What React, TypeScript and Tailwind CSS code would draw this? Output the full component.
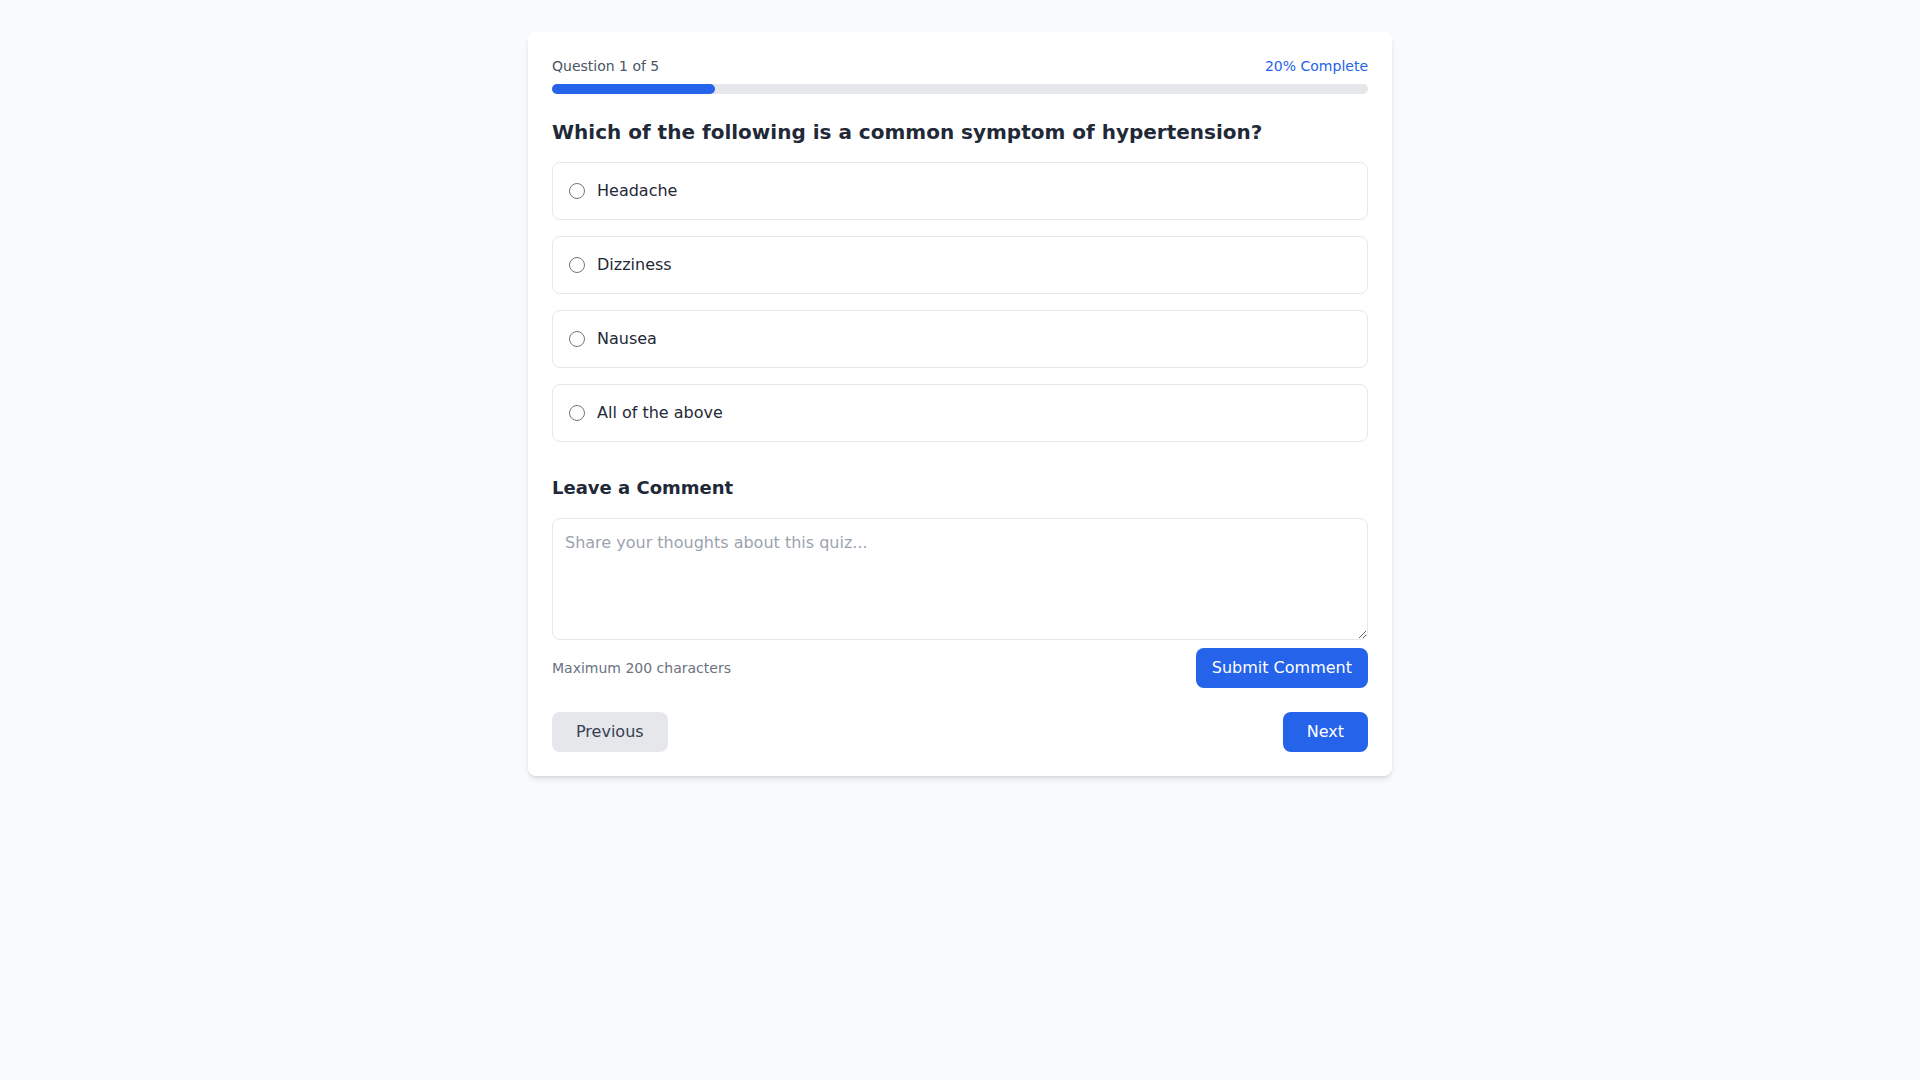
import { useState } from 'react'

const options = ['Headache', 'Dizziness', 'Nausea', 'All of the above']

export default function App() {
  const [selected, setSelected] = useState<string | null>(null)
  const [comment, setComment] = useState('')

  return (
    <div className="min-h-screen bg-[#f9fafb] py-8 font-['DejaVu_Sans',sans-serif]">
      <div className="mx-auto max-w-4xl px-4">
        <div className="rounded-lg bg-white p-6 shadow-[0_4px_6px_-1px_rgba(0,0,0,0.1),0_2px_4px_-2px_rgba(0,0,0,0.1)]">
          <div className="mb-2 flex items-center justify-between">
            <span className="text-sm text-[#4b5563]">Question 1 of 5</span>
            <span className="text-sm text-[#2563eb]">20% Complete</span>
          </div>
          <div className="mb-6 h-2.5 w-full rounded-full bg-[#e5e7eb]">
            <div className="h-2.5 w-1/5 rounded-full bg-[#2563eb]" />
          </div>

          <h2 className="mb-4 text-xl font-bold text-[#1f2937]">
            Which of the following is a common symptom of hypertension?
          </h2>

          <div className="space-y-4">
            {options.map((opt) => (
              <label
                key={opt}
                className="flex cursor-pointer items-center rounded-lg border border-[#e5e7eb] p-4 hover:bg-[#f9fafb]"
              >
                <input
                  type="radio"
                  name="answer"
                  checked={selected === opt}
                  onChange={() => setSelected(opt)}
                  className="mr-3 h-4 w-4"
                />
                <span className="text-base text-[#1f2937]">{opt}</span>
              </label>
            ))}
          </div>

          <div className="mt-8">
            <h3 className="mb-4 text-lg font-bold text-[#1f2937]">Leave a Comment</h3>
            <textarea
              rows={4}
              maxLength={200}
              value={comment}
              onChange={(e) => setComment(e.target.value)}
              placeholder="Share your thoughts about this quiz..."
              className="block w-full rounded-lg border border-[#e5e7eb] p-3 text-base text-[#1f2937] placeholder:text-[#9ca3af] focus:outline-none"
            />
            <div className="mt-2 flex items-center justify-between">
              <span className="text-sm text-[#6b7280]">Maximum 200 characters</span>
              <button className="rounded-lg bg-[#2563eb] px-4 py-2 text-base text-white hover:bg-[#1d4ed8]">
                Submit Comment
              </button>
            </div>
          </div>

          <div className="mt-6 flex justify-between">
            <button className="rounded-lg bg-[#e5e7eb] px-6 py-2 text-base text-[#374151]">Previous</button>
            <button className="rounded-lg bg-[#2563eb] px-6 py-2 text-base text-white">Next</button>
          </div>
        </div>
      </div>
    </div>
  )
}
